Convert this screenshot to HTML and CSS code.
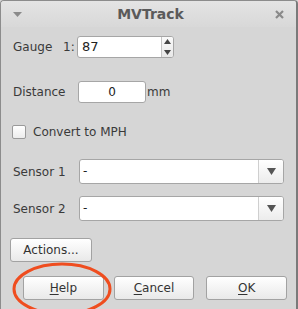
FILE: index.html
```html
<!DOCTYPE html>
<html lang="en">
<head>
  <meta charset="UTF-8" />
  <title>MVTrack</title>
  <link rel="stylesheet" href="styles.css">
</head>
<body>
  <div class="window">
    <div class="titlebar">
      <svg class="menu-icon" width="9" height="5" viewBox="0 0 9 5"><path d="M0 0h9L4.5 5z" fill="#8a8a8a"/></svg>
      <span class="title">MVTrack</span>
      <svg class="close-icon" width="9" height="9" viewBox="0 0 9 9"><path d="M1 1l7 7M8 1L1 8" stroke="#8a8a8a" stroke-width="2.2"/></svg>
    </div>

    <div class="content">
      <div class="row row-gauge">
        <span class="label">Gauge</span>
        <span class="prefix">1:</span>
        <div class="spinbox">
          <span class="spin-value">87</span>
          <div class="spin-buttons">
            <svg width="7" height="6" viewBox="0 0 7 6"><path d="M0 5h7L3.5 0z" fill="#444"/></svg>
            <svg width="7" height="6" viewBox="0 0 7 6"><path d="M0 1h7L3.5 6z" fill="#444"/></svg>
          </div>
        </div>
      </div>

      <div class="row row-distance">
        <span class="label">Distance</span>
        <div class="entry">0</div>
        <span class="unit">mm</span>
      </div>

      <div class="row row-check">
        <span class="checkbox"></span>
        <span class="check-label">Convert to MPH</span>
      </div>

      <div class="row row-sensor1">
        <span class="label">Sensor 1</span>
        <div class="combo">
          <span class="combo-value">-</span>
          <span class="combo-button"><svg width="9" height="7" viewBox="0 0 9 7"><path d="M0 0h9L4.5 7z" fill="#555"/></svg></span>
        </div>
      </div>

      <div class="row row-sensor2">
        <span class="label">Sensor 2</span>
        <div class="combo">
          <span class="combo-value">-</span>
          <span class="combo-button"><svg width="9" height="7" viewBox="0 0 9 7"><path d="M0 0h9L4.5 7z" fill="#555"/></svg></span>
        </div>
      </div>

      <div class="row row-actions">
        <button class="btn btn-actions">Actions...</button>
      </div>

      <div class="row row-buttons">
        <button class="btn"><u>H</u>elp</button>
        <button class="btn"><u>C</u>ancel</button>
        <button class="btn"><u>O</u>K</button>
      </div>
    </div>

    <svg class="highlight" width="110" height="60" viewBox="0 0 110 60">
      <ellipse cx="50" cy="27" rx="48" ry="25" fill="none" stroke="#ef4d1f" stroke-width="3"/>
    </svg>
  </div>
</body>
</html>
```

FILE: styles.css
```css
body {
  margin: 0;
  background: #d6d6d6;
  font-family: "DejaVu Sans", sans-serif;
  font-size: 12px;
  color: #3a3a3a;
}

.window {
  position: relative;
  box-sizing: border-box;
  width: 298px;
  height: 309px;
  border: 1px solid #8c8c8c;
  border-right: 2px solid #7a7a7a;
  border-bottom: none;
  border-radius: 4px 4px 0 0;
  background: #d6d6d6;
  overflow: hidden;
}

.titlebar {
  height: 26px;
  display: flex;
  align-items: center;
  justify-content: space-between;
  padding: 0 12px 0 12px;
  background: linear-gradient(#e4e4e4, #d8d8d8);
}

.title {
  font-weight: bold;
  font-size: 14px;
  color: #5a5a5a;
  margin-left: 4px;
}

.content {
  padding: 0 9px 0 12px;
}

.row {
  display: flex;
  align-items: center;
}

.label {
  width: 50px;
}

.row-gauge {
  margin-top: 9px;
  height: 22px;
}

.prefix {
  width: 14px;
}

.spinbox {
  display: flex;
  width: 97px;
  height: 22px;
  box-sizing: border-box;
  border: 1px solid #a6a6a6;
  border-radius: 3px;
  background: #fff;
}

.spin-value {
  flex: 1;
  padding-left: 4px;
  line-height: 20px;
  font-size: 13px;
  color: #222;
}

.spin-buttons {
  width: 11px;
  display: flex;
  flex-direction: column;
  align-items: center;
  justify-content: space-around;
  border-left: 1px solid #c4c4c4;
  background: linear-gradient(#fafafa, #e8e8e8);
  border-radius: 0 2px 2px 0;
}

.row-distance {
  margin-top: 23px;
  height: 22px;
}

.row-distance .label {
  width: 65px;
}

.entry {
  width: 68px;
  height: 22px;
  box-sizing: border-box;
  border: 1px solid #a6a6a6;
  border-radius: 3px;
  background: #fff;
  text-align: center;
  line-height: 20px;
  color: #222;
}

.unit {
  margin-left: 1px;
}

.row-check {
  margin-top: 22px;
  height: 14px;
}

.checkbox {
  width: 12px;
  height: 12px;
  margin-left: -1px;
  border: 1px solid #9a9a9a;
  border-radius: 2px;
  background: linear-gradient(#ffffff, #ececec);
}

.check-label {
  margin-left: 7px;
}

.row-sensor1 {
  margin-top: 20px;
  height: 25px;
}

.row-sensor2 {
  margin-top: 12px;
  height: 25px;
}

.row-sensor1 .label,
.row-sensor2 .label {
  width: 66px;
}

.combo {
  display: flex;
  width: 205px;
  height: 25px;
  box-sizing: border-box;
  border: 1px solid #a6a6a6;
  border-radius: 3px;
  background: #fff;
}

.combo-value {
  flex: 1;
  padding-left: 3px;
  line-height: 23px;
  color: #222;
}

.combo-button {
  width: 24px;
  display: flex;
  align-items: center;
  justify-content: center;
  border-left: 1px solid #cfcfcf;
  background: linear-gradient(#ffffff, #ececec);
  border-radius: 0 2px 2px 0;
}

.btn {
  height: 24px;
  box-sizing: border-box;
  border: 1px solid #a2a2a2;
  border-radius: 3px;
  background: linear-gradient(#ffffff, #e9e9e9);
  font-family: "DejaVu Sans", sans-serif;
  font-size: 12px;
  color: #333;
  padding: 0;
}

.btn u {
  text-decoration-thickness: 1px;
  text-underline-offset: 2px;
}

.row-actions {
  margin-top: 17px;
  margin-left: -3px;
}

.btn-actions {
  width: 82px;
}

.row-buttons {
  margin-top: 14px;
  margin-left: 10px;
  gap: 10px;
}

.row-buttons .btn {
  width: 82px;
}

.row-buttons .btn:last-child {
  margin-left: 2px;
}

.highlight {
  position: absolute;
  left: 11px;
  top: 261px;
}
```
